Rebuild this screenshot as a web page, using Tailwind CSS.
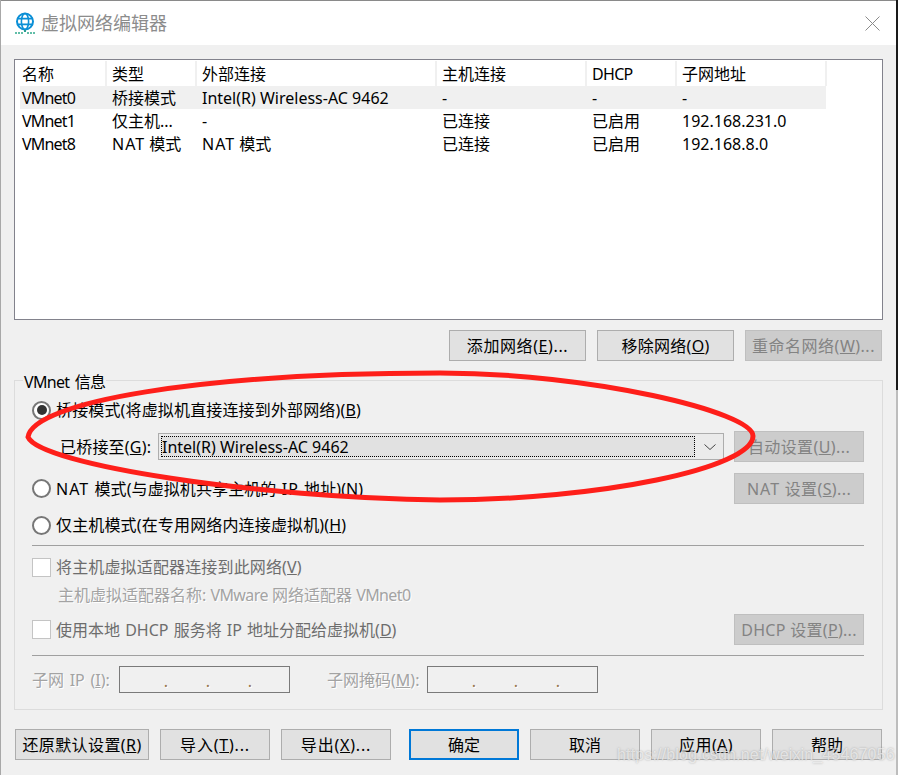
<!DOCTYPE html>
<html lang="zh-CN">
<head>
<meta charset="UTF-8">
<title>虚拟网络编辑器</title>
<script src="https://cdn.jsdelivr.net/npm/@tailwindcss/browser@4"></script>
</head>
<body class="bg-[#f0f0f0]">
<div class="relative w-[898px] h-[775px] overflow-hidden flex font-['Noto_Sans','Noto_Sans_CJK_SC',sans-serif] text-[16px] leading-[20px] text-black">
  <!-- left window edge -->
  <div class="w-px shrink-0 bg-[#a8a8a8]"></div>

  <div class="w-[895px] shrink-0 flex flex-col">
    <!-- title bar -->
    <div class="h-[45px] shrink-0 bg-white border-t border-[#8a8a8a] flex items-center">
      <svg class="ml-[14px] w-[20px] h-[22px]" viewBox="0 0 20 22" fill="none">
        <circle cx="10" cy="9.5" r="8" stroke="#0b8fd6" stroke-width="2"/>
        <ellipse cx="10" cy="9.5" rx="3.6" ry="8" stroke="#0b8fd6" stroke-width="1.6"/>
        <path d="M2 6.6h16M2 12.4h16" stroke="#0b8fd6" stroke-width="1.6"/>
        <path d="M10 18v2" stroke="#2a9d8f" stroke-width="2"/>
        <path d="M0 21h8M12 21h8" stroke="#2fa98c" stroke-width="1.4" stroke-dasharray="2 1"/>
      </svg>
      <span class="ml-[6px] text-[18px] text-[#8c8c8c]">虚拟网络编辑器</span>
      <svg class="ml-auto mr-[16px] w-[15px] h-[15px]" viewBox="0 0 15 15" fill="none">
        <path d="M0.5 0.5l14 14M14.5 0.5l-14 14" stroke="#8a8a8a" stroke-width="1"/>
      </svg>
    </div>

    <div class="flex-1 pl-[13px]">
      <!-- network list -->
      <div class="mt-[14px] w-[869px] h-[261px] bg-white border border-[#82828c] pt-px">
        <div class="grid grid-cols-[90px_90px_240px_150px_90px_152px] w-[812px] h-[25px] items-center">
          <div class="pl-[7px] h-full flex items-center">名称</div>
          <div class="pl-[5px] h-full flex items-center border-l-2 border-[#f0f0f0]">类型</div>
          <div class="pl-[5px] h-full flex items-center border-l-2 border-[#f0f0f0]">外部连接</div>
          <div class="pl-[5px] h-full flex items-center border-l-2 border-[#f0f0f0]">主机连接</div>
          <div class="pl-[5px] h-full flex items-center border-l-2 border-[#f0f0f0] tracking-[-0.7px]">DHCP</div>
          <div class="pl-[5px] h-full flex items-center border-x-2 border-[#f0f0f0]">子网地址</div>
        </div>
        <div class="grid grid-cols-[90px_90px_240px_150px_90px_150px] w-[811px] h-[23px] items-center bg-[linear-gradient(to_right,transparent_5px,#f0f0f0_5px)]">
          <div class="pl-[7px] tracking-[-0.8px]">VMnet0</div><div class="pl-[7px]">桥接模式</div><div class="pl-[7px]">Intel(R) Wireless-AC 9462</div><div class="pl-[7px]">-</div><div class="pl-[7px]">-</div><div class="pl-[7px]">-</div>
        </div>
        <div class="grid grid-cols-[90px_90px_240px_150px_90px_150px] w-[811px] h-[23px] items-center">
          <div class="pl-[7px] tracking-[-0.8px]">VMnet1</div><div class="pl-[7px]">仅主机...</div><div class="pl-[7px]">-</div><div class="pl-[7px]">已连接</div><div class="pl-[7px]">已启用</div><div class="pl-[7px]">192.168.231.0</div>
        </div>
        <div class="grid grid-cols-[90px_90px_240px_150px_90px_150px] w-[811px] h-[23px] items-center">
          <div class="pl-[7px] tracking-[-0.8px]">VMnet8</div><div class="pl-[7px]"><span class="tracking-[1px]">NAT</span> 模式</div><div class="pl-[7px]"><span class="tracking-[1px]">NAT</span> 模式</div><div class="pl-[7px]">已连接</div><div class="pl-[7px]">已启用</div><div class="pl-[7px]">192.168.8.0</div>
        </div>
      </div>

      <!-- list buttons -->
      <div class="mt-[10px] w-[868px] flex justify-end gap-[11px]">
        <button class="w-[137px] h-[31px] bg-[#e1e1e1] border border-[#adadad] tracking-[0.6px]">添加网络(<u>E</u>)...</button>
        <button class="w-[137px] h-[31px] bg-[#e1e1e1] border border-[#adadad] tracking-[0.3px]">移除网络(<u>O</u>)</button>
        <button class="w-[137px] h-[31px] bg-[#cccccc] border border-[#bfbfbf] text-[#838383] tracking-[0.5px]">重命名网络(<u>W</u>)...</button>
      </div>

      <!-- VMnet info -->
      <div class="relative mt-[19px] w-[869px] h-[330px] border border-[#dcdcdc] pl-[17px] pt-[19px]">
        <span class="absolute left-[8px] -top-[9px] px-px bg-[#f0f0f0] tracking-[-0.7px] [word-spacing:2px]">VMnet 信息</span>

        <div class="flex items-center h-[20px]">
          <div class="w-[19px] h-[19px] rounded-full bg-white border-2 border-[#777777] flex items-center justify-center">
            <div class="w-[10px] h-[10px] rounded-full bg-[#333333]"></div>
          </div>
          <span class="ml-[5px] tracking-[0.15px]">桥接模式(将虚拟机直接连接到外部网络)(<u>B</u>)</span>
        </div>

        <div class="mt-[11px] w-[832px] h-[31px] flex items-center">
          <span class="ml-[28px] w-[98px] tracking-[0.2px]">已桥接至(<u>G</u>):</span>
          <div class="w-[566px] h-[27px] bg-[#ebebeb] border border-[#adadad] flex items-center p-[2px]">
            <div class="w-[534px] h-[21px] bg-[#e1e1e1] border border-dotted border-black flex items-center">Intel(R) Wireless-AC 9462</div>
            <svg class="ml-[9px] w-[12px] h-[6px]" viewBox="0 0 12 6" fill="none"><path d="M0.5 0.5L6 5.5L11.5 0.5" stroke="#444444"/></svg>
          </div>
          <button class="ml-auto w-[130px] h-[31px] bg-[#cccccc] border border-[#bfbfbf] text-[#838383] tracking-[0.4px]">自动设置(<u>U</u>)...</button>
        </div>

        <div class="mt-[11px] w-[832px] h-[31px] flex items-center">
          <div class="w-[19px] h-[19px] rounded-full bg-white border-2 border-[#777777]"></div>
          <span class="ml-[5px] tracking-[0.1px] [word-spacing:1px]"><span class="tracking-[1px]">NAT</span> 模式(与虚拟机共享主机的 <span class="tracking-[1px]">IP</span> 地址)(<u>N</u>)</span>
          <button class="ml-auto w-[130px] h-[31px] bg-[#cccccc] border border-[#bfbfbf] text-[#838383] tracking-[0.4px]"><span class="tracking-[1px]">NAT</span> 设置(<u>S</u>)...</button>
        </div>

        <div class="mt-[11px] flex items-center h-[20px]">
          <div class="w-[19px] h-[19px] rounded-full bg-white border-2 border-[#777777]"></div>
          <span class="ml-[5px] tracking-[0.15px]">仅主机模式(在专用网络内连接虚拟机)(<u>H</u>)</span>
        </div>

        <div class="mt-[10px] w-[832px] h-px bg-[#a0a0a0]"></div>

        <div class="mt-[11px] flex items-center h-[20px] text-[#6d6d6d]">
          <div class="w-[19px] h-[19px] bg-white border border-[#c4c4c4]"></div>
          <span class="ml-[5px] tracking-[0.15px]">将主机虚拟适配器连接到此网络(<u>V</u>)</span>
        </div>

        <div class="mt-[8px] h-[20px] ml-[26px] text-[#a3a3a3] [text-shadow:1px_1px_0_#ffffff]">主机虚拟适配器名称: <span class="tracking-[-0.6px]">VMware</span> 网络适配器 <span class="tracking-[-0.6px]">VMnet0</span></div>

        <div class="mt-[9px] w-[832px] h-[31px] flex items-center text-[#6d6d6d]">
          <div class="w-[19px] h-[19px] bg-white border border-[#c4c4c4]"></div>
          <span class="ml-[5px] [word-spacing:1px]">使用本地 DHCP 服务将 IP 地址分配给虚拟机(<u>D</u>)</span>
          <button class="ml-auto w-[130px] h-[31px] bg-[#cccccc] border border-[#bfbfbf] text-[#838383] tracking-[0.3px]">DHCP 设置(<u>P</u>)...</button>
        </div>

        <div class="mt-[10px] w-[832px] h-px bg-[#a0a0a0]"></div>

        <div class="mt-[10px] h-[27px] flex items-center text-[#a3a3a3] [text-shadow:1px_1px_0_#ffffff]">
          <span class="w-[87px] [word-spacing:1.5px]">子网 IP (<u>I</u>):</span>
          <div class="w-[171px] h-[27px] border border-[#7a7a7a] flex pl-[25px] pt-[4px] text-[#9a7a50]">
            <span class="w-[42px] text-center">.</span><span class="w-[42px] text-center">.</span><span class="w-[42px] text-center">.</span>
          </div>
          <span class="ml-[37px] w-[100px]">子网掩码(<u>M</u>):</span>
          <div class="w-[171px] h-[27px] border border-[#7a7a7a] flex pl-[25px] pt-[4px] text-[#9a7a50]">
            <span class="w-[42px] text-center">.</span><span class="w-[42px] text-center">.</span><span class="w-[42px] text-center">.</span>
          </div>
        </div>
      </div>

      <!-- dialog buttons -->
      <div class="mt-[19px] w-[868px] pl-px flex">
        <button class="w-[134px] h-[31px] bg-[#e1e1e1] border border-[#adadad] tracking-[0.4px]">还原默认设置(<u>R</u>)</button>
        <button class="ml-[11px] w-[110px] h-[31px] bg-[#e1e1e1] border border-[#adadad] tracking-[0.8px]">导入(<u>T</u>)...</button>
        <button class="ml-[11px] w-[110px] h-[31px] bg-[#e1e1e1] border border-[#adadad] tracking-[0.8px]">导出(<u>X</u>)...</button>
        <button class="ml-[18px] w-[110px] h-[31px] bg-[#e1e1e1] border-2 border-[#0078d7]">确定</button>
        <button class="ml-[11px] w-[110px] h-[31px] bg-[#e1e1e1] border border-[#adadad]">取消</button>
        <button class="ml-[11px] w-[110px] h-[31px] bg-[#e1e1e1] border border-[#adadad] tracking-[0.4px]">应用(<u>A</u>)</button>
        <button class="ml-[11px] w-[110px] h-[31px] bg-[#e1e1e1] border border-[#adadad]">帮助</button>
      </div>
    </div>
  </div>

  <!-- screen behind the window -->
  <div class="w-[2px] shrink-0 bg-[linear-gradient(to_bottom,#1a1a1a_0,#1a1a1a_390px,#bdbdbd_390px)]"></div>

  <!-- hand-drawn annotation -->
  <svg class="absolute left-0 top-0 pointer-events-none" width="898" height="775" viewBox="0 0 898 775" fill="none">
    <path d="M28 437C33 402 200 373 440 373C590 373 753 412 753 436C753 468 600 500 440 500C260 498 40 465 28 437Z" stroke="#fe1f1a" stroke-width="5"/>
  </svg>

  <!-- blog watermark -->
  <span class="absolute left-[617px] top-[743px] whitespace-nowrap font-['Liberation_Sans',sans-serif] text-[16px] tracking-[0.15px] leading-[24px] text-white/60 [text-shadow:0_0_2px_rgba(120,120,120,0.6)]">https://blog.csdn.net/weixin_45467056</span>
</div>
</body>
</html>
